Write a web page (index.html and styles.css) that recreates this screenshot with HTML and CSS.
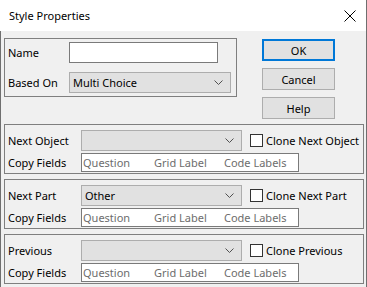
FILE: index.html
```html
<!DOCTYPE html>
<html lang="en">
<head>
    <meta charset="UTF-8">
    <title>Style Properties</title>
    <link rel="stylesheet" href="styles.css">
</head>
<body>

    <div class="window">
        <div class="titlebar">
            <span class="title">Style Properties</span>
            <svg class="close" width="12" height="12" viewBox="0 0 12 12">
                <path d="M0.5 0.5 L11.5 11.5 M11.5 0.5 L0.5 11.5" stroke="#000" stroke-width="1"/>
            </svg>
        </div>

        <div class="content">
            <div class="top-row">
                <div class="group basic">
                    <div class="row">
                        <label class="label">Name</label>
                        <div class="textbox name-box"></div>
                    </div>
                    <div class="row">
                        <label class="label">Based On</label>
                        <div class="combo based-combo">
                            <span>Multi Choice</span>
                            <svg class="chev" width="9" height="5" viewBox="0 0 9 5"><path d="M0.5 0.5 L4.5 4.5 L8.5 0.5" fill="none" stroke="#505050"/></svg>
                        </div>
                    </div>
                </div>

                <div class="buttons">
                    <button class="btn default">OK</button>
                    <button class="btn">Cancel</button>
                    <button class="btn">Help</button>
                </div>
            </div>

            <!-- Next object / part / previous -->
            <div class="group link">
                <label class="label">Next Object</label>
                <div class="combo">
                    <span></span>
                    <svg class="chev" width="9" height="5" viewBox="0 0 9 5"><path d="M0.5 0.5 L4.5 4.5 L8.5 0.5" fill="none" stroke="#505050"/></svg>
                </div>
                <div class="check"><span class="box"></span>Clone Next Object</div>
                <label class="label">Copy Fields</label>
                <div class="fields">
                    <span class="f1">Question</span><span class="f2">Grid Label</span><span>Code Labels</span>
                </div>
            </div>

            <div class="group link">
                <label class="label">Next Part</label>
                <div class="combo">
                    <span>Other</span>
                    <svg class="chev" width="9" height="5" viewBox="0 0 9 5"><path d="M0.5 0.5 L4.5 4.5 L8.5 0.5" fill="none" stroke="#505050"/></svg>
                </div>
                <div class="check"><span class="box"></span>Clone Next Part</div>
                <label class="label">Copy Fields</label>
                <div class="fields">
                    <span class="f1">Question</span><span class="f2">Grid Label</span><span>Code Labels</span>
                </div>
            </div>

            <div class="group link">
                <label class="label">Previous</label>
                <div class="combo">
                    <span></span>
                    <svg class="chev" width="9" height="5" viewBox="0 0 9 5"><path d="M0.5 0.5 L4.5 4.5 L8.5 0.5" fill="none" stroke="#505050"/></svg>
                </div>
                <div class="check"><span class="box"></span>Clone Previous</div>
                <label class="label">Copy Fields</label>
                <div class="fields">
                    <span class="f1">Question</span><span class="f2">Grid Label</span><span>Code Labels</span>
                </div>
            </div>
        </div>
    </div>

</body>
</html>
```

FILE: styles.css
```css
body {
    margin: 0;
    font-family: "Noto Sans", sans-serif;
    font-size: 11px;
    color: #000;
    background: #f0f0f0;
}

.window {
    width: 367px;
    height: 287px;
    box-sizing: border-box;
    border-right: 1px solid #6f6f6f;
    background: #f0f0f0;
    overflow: hidden;
    white-space: nowrap;
}

.titlebar {
    height: 31px;
    background: #fff;
    display: flex;
    align-items: center;
    justify-content: space-between;
    padding: 0 10px 0 9px;
}

.title {
    margin-top: -1px;
}

.content {
    height: 256px;
    box-sizing: border-box;
    border-left: 1px solid #6f6f6f;
    padding: 7px 2px 0 3px;
}

.top-row {
    display: flex;
    align-items: flex-start;
}

.group {
    border: 1px solid #7f7f7f;
    box-sizing: border-box;
}

.basic {
    width: 233px;
    height: 59px;
    padding: 3px 0 0 3px;
}

.basic .row {
    display: flex;
    align-items: center;
    height: 21px;
    margin-bottom: 9px;
}

.basic .label {
    width: 61px;
}

.textbox {
    height: 21px;
    background: #fff;
    border: 1px solid #7a7a7a;
    box-sizing: border-box;
}

.name-box {
    width: 149px;
}

.combo {
    height: 21px;
    background: #e1e1e1;
    border: 1px solid #adadad;
    box-sizing: border-box;
    display: flex;
    align-items: center;
    justify-content: space-between;
    padding: 0 7px 0 3px;
}

.based-combo {
    width: 162px;
}

.buttons {
    display: flex;
    flex-direction: column;
    gap: 7px;
    margin-left: 25px;
    margin-top: 1px;
}

.btn {
    width: 73px;
    height: 22px;
    background: #e1e1e1;
    border: 1px solid #adadad;
    font-family: inherit;
    font-size: 11px;
    color: #000;
    padding: 0;
}

.btn.default {
    border: 2px solid #0078d7;
}

.link {
    width: 360px;
    height: 50px;
    margin-top: 5px;
    display: grid;
    grid-template-columns: 73px 161px auto;
    grid-template-rows: 21px 19px;
    row-gap: 2px;
    align-items: center;
    padding: 5px 0 0 3px;
}

.check {
    display: flex;
    align-items: center;
    margin-left: 8px;
}

.box {
    width: 13px;
    height: 13px;
    box-sizing: border-box;
    border: 1px solid #333;
    background: #fff;
    margin-right: 3px;
}

.fields {
    grid-column: 2 / 4;
    width: 218px;
    height: 19px;
    box-sizing: border-box;
    background: #fff;
    border: 1px solid #7a7a7a;
    display: flex;
    align-items: center;
    padding-left: 1px;
    color: #6d6d6d;
}

.f1 {
    width: 71px;
}

.f2 {
    width: 70px;
}
```
